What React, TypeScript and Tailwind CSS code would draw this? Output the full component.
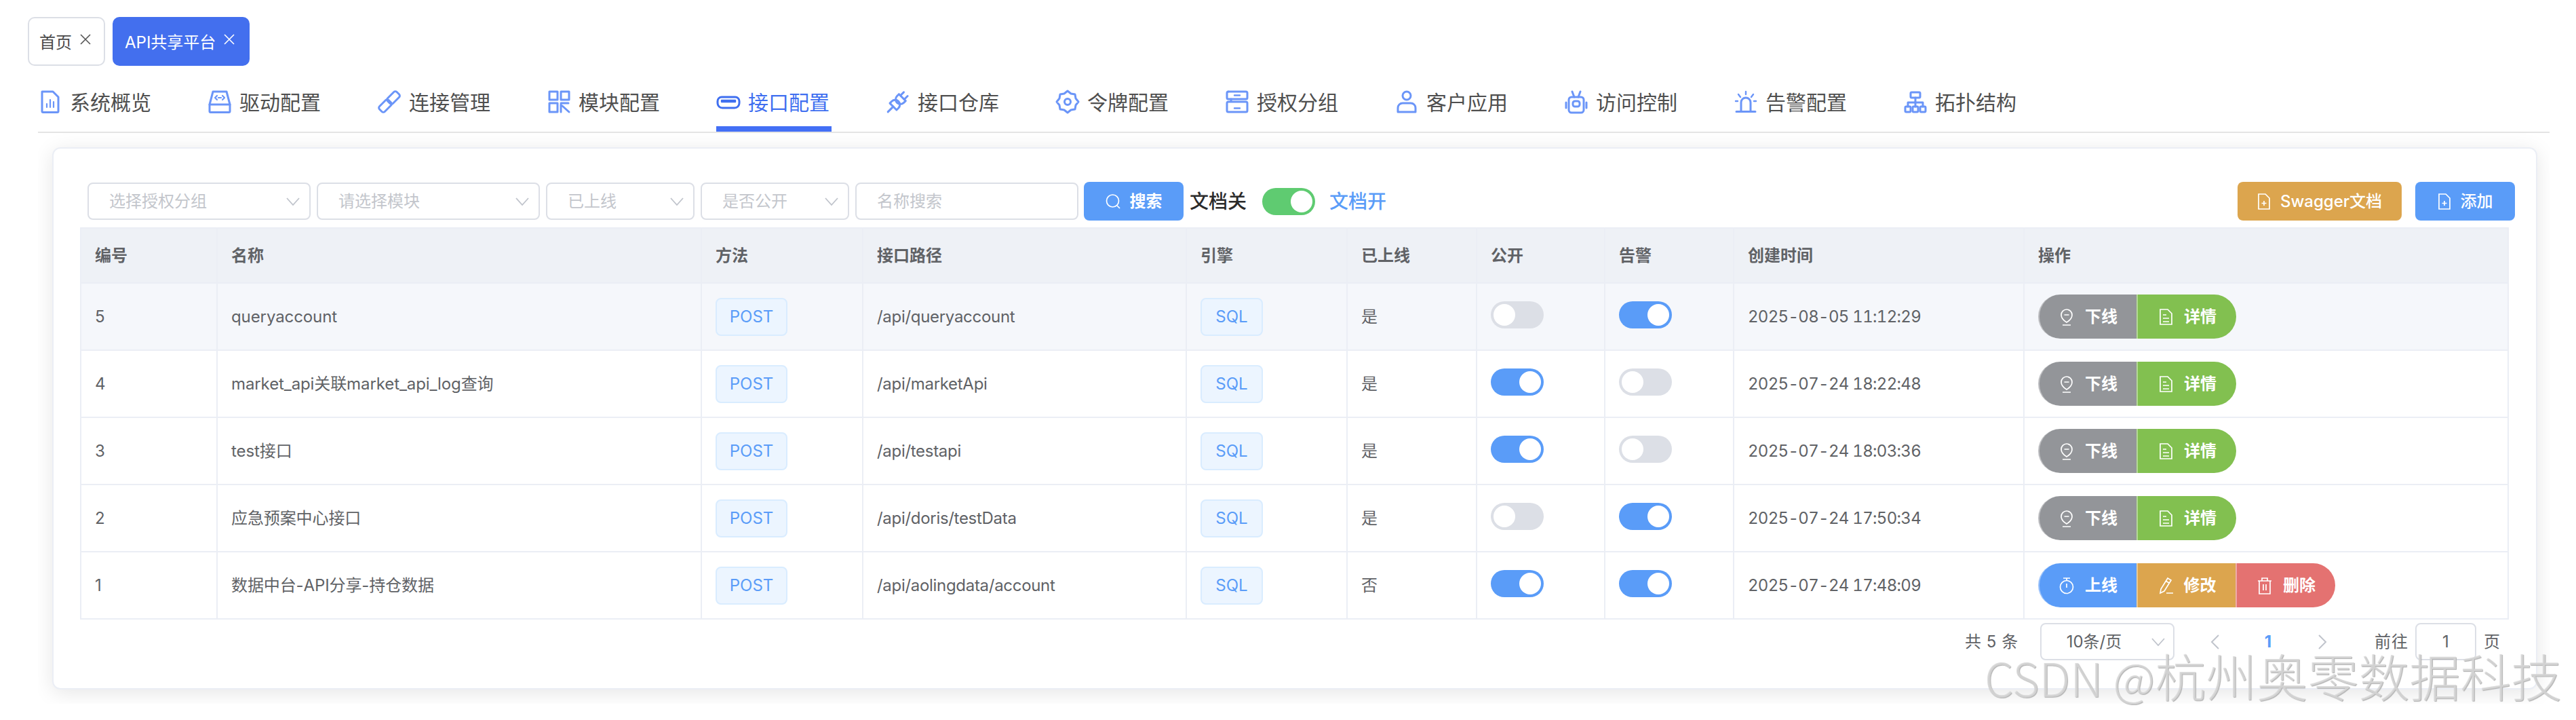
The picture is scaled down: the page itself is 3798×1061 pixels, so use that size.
import React from "react";

const BLUE = "#6b95f8";

function I({ children, color = BLUE }: any) {
  return (
    <svg width={36} height={36} viewBox="0 0 36 36" fill="none" stroke={color} strokeWidth={3} strokeLinejoin="round" strokeLinecap="round" className="shrink-0">
      {children}
    </svg>
  );
}

const navIcons: Record<string, React.ReactNode> = {
  report: (
    <I>
      <path d="M6 3h16l8 8v21a1.5 1.5 0 0 1-1.5 1.5h-21A1.5 1.5 0 0 1 6 32z" />
      <path d="M13 26v-5M18 26V15M23 26v-8" strokeWidth={2.2} />
    </I>
  ),
  drive: (
    <I>
      <path d="M8 3h20l5 19v10a1.5 1.5 0 0 1-1.5 1.5h-27A1.5 1.5 0 0 1 3 32V22z" />
      <path d="M3 22h30" />
      <path d="M14 9l-3 3 3 3M22 9l3 3-3 3M16 12h4" strokeWidth={2.2} />
    </I>
  ),
  link: (
    <I>
      <g transform="rotate(-45 18 18)">
        <rect x="0" y="12.5" width="19" height="11" rx="3" />
        <rect x="17" y="12.5" width="19" height="11" rx="3" />
      </g>
    </I>
  ),
  module: (
    <I>
      <rect x="4" y="3" width="12" height="12" />
      <rect x="21" y="3" width="12" height="12" />
      <rect x="4" y="20" width="12" height="13" />
      <path d="M21 20h11M21 22v11M23 24l10 9" />
    </I>
  ),
  iface: (
    <I color="#3f6ff0">
      <path d="M8 11h20a6 6 0 0 1 6 6v3a7 7 0 0 1-7 7H9a7 7 0 0 1-7-7v-3a6 6 0 0 1 6-6z" />
      <path d="M8 18v-2h20v2H8z" strokeWidth={2.4} />
    </I>
  ),
  plug: (
    <I>
      <g transform="rotate(-45 18 18)">
        <path d="M8 11h4a7 7 0 0 1 0 14H8z" />
        <path d="M27 11h-4a7 7 0 0 0 0 14h4z" />
        <path d="M8 18H-3M27 14h7M27 22h7" />
      </g>
    </I>
  ),
  token: (
    <I>
      <path d="M18 2l5 4 6 1 1 6 4 5-4 5-1 6-6 1-5 4-5-4-6-1-1-6-4-5 4-5 1-6 6-1z" />
      <circle cx="18" cy="18" r="4.5" />
    </I>
  ),
  group: (
    <I>
      <path d="M5 3h26a2 2 0 0 1 2 2v7a2 2 0 0 1-2 2H9v4h22a2 2 0 0 1 2 2v11a2 2 0 0 1-2 2H5a2 2 0 0 1-2-2V20a2 2 0 0 1 2-2h2" />
      <path d="M3 12V5a2 2 0 0 1 2-2M3 12a2 2 0 0 0 2 2h4" />
      <path d="M14 8.5h8M14 27.5h8" strokeWidth={2.4} />
    </I>
  ),
  user: (
    <I>
      <circle cx="18" cy="9" r="6" />
      <path d="M5 33v-6a7 7 0 0 1 7-7h12a7 7 0 0 1 7 7v6z" />
    </I>
  ),
  robot: (
    <I>
      <path d="M12 3l3 8M24 3l-3 8" />
      <rect x="7" y="11" width="22" height="23" rx="4" />
      <rect x="13" y="17" width="10" height="8" rx="3" />
      <path d="M3 19v8M33 19v8" />
    </I>
  ),
  alarm: (
    <I>
      <path d="M11 31V19a7 7 0 0 1 14 0v12M4 32.5h28" />
      <path d="M18 3v4M7 7l3 4M29 7l-3 4M3 17h3M30 17h3" strokeWidth={2.4} />
    </I>
  ),
  topo: (
    <I>
      <rect x="11" y="4" width="14" height="8" rx="1.5" />
      <rect x="3" y="25" width="8" height="8" rx="1.5" />
      <rect x="14" y="25" width="8" height="8" rx="1.5" />
      <rect x="25" y="25" width="8" height="8" rx="1.5" />
      <path d="M18 12v13M7 25v-6h22v6" />
    </I>
  ),
};

const navs = [
  ["report", "系统概览"],
  ["drive", "驱动配置"],
  ["link", "连接管理"],
  ["module", "模块配置"],
  ["iface", "接口配置"],
  ["plug", "接口仓库"],
  ["token", "令牌配置"],
  ["group", "授权分组"],
  ["user", "客户应用"],
  ["robot", "访问控制"],
  ["alarm", "告警配置"],
  ["topo", "拓扑结构"],
];

function Close({ color }: { color: string }) {
  return (
    <svg width="16" height="16" viewBox="0 0 16 16" stroke={color} strokeWidth="1.6" className="shrink-0 -mt-[6px] ml-[12px]">
      <path d="M1 1l14 14M15 1L1 15" />
    </svg>
  );
}

function Chevron() {
  return (
    <svg width="20" height="12" viewBox="0 0 20 12" fill="none" stroke="#c0c4cc" strokeWidth="1.8" className="shrink-0">
      <path d="M1 1l9 10 9-10" />
    </svg>
  );
}

function Sel({ w, text }: { w: string; text: string }) {
  return (
    <div className={`${w} h-[55px] mr-[9px] border-2 border-[#dcdfe6] rounded-[8px] flex items-center justify-between pl-[30px] pr-[14px] text-[24px] text-[#c3c6cc] shrink-0`}>
      <span>{text}</span>
      <Chevron />
    </div>
  );
}

function BtnIcon({ kind }: { kind: string }) {
  const p = { width: 24, height: 26, viewBox: "0 0 24 26", fill: "none", stroke: "#ffffff", strokeWidth: 1.7, className: "shrink-0" } as any;
  if (kind === "off")
    return (
      <svg {...p}>
        <path d="M12 21c-5-3-8-7-8-11a8 8 0 0 1 16 0c0 4-3 8-8 11z" />
        <path d="M8.5 10h7M6 25h12" />
      </svg>
    );
  if (kind === "doc")
    return (
      <svg {...p}>
        <path d="M4 2h11l6 6v16H4z" />
        <path d="M8 10h5M8 15h9M8 20h9" />
      </svg>
    );
  if (kind === "on")
    return (
      <svg {...p}>
        <circle cx="12" cy="15" r="9.5" />
        <path d="M7 2h10M12 2v3M12 10v6" />
      </svg>
    );
  if (kind === "edit")
    return (
      <svg {...p}>
        <path d="M15 2l5 3-10 16-6 3 1-6z" />
        <path d="M12 6l5 3M13 24h10" />
      </svg>
    );
  return (
    <svg {...p}>
      <path d="M2 6h20M8 6V2h8v4M4 6v19h16V6" />
      <path d="M10 11v9M14 11v9" />
    </svg>
  );
}

function Act({ bg, kind, text, w, first, last }: any) {
  return (
    <button className={`${w} ${bg} h-[65px] flex items-center justify-center gap-[15px] text-white text-[24px] font-bold border-l-2 border-[#ffffff66] ${first ? "rounded-l-[33px] border-l-0" : ""} ${last ? "rounded-r-[33px]" : ""}`}>
      <BtnIcon kind={kind} />
      <span>{text}</span>
    </button>
  );
}

function Switch({ on, green }: { on: boolean; green?: boolean }) {
  const bg = on ? (green ? "bg-[#5fcb71]" : "bg-[#5a9cf8]") : "bg-[#dcdfe6]";
  return (
    <span className={`${bg} inline-flex items-center w-[78px] h-[40px] rounded-full px-[4px] shrink-0 ${on ? "justify-end" : "justify-start"}`}>
      <span className="w-[32px] h-[32px] rounded-full bg-white" />
    </span>
  );
}

function Tag({ t, w }: { t: string; w: string }) {
  return (
    <span className={`${w} h-[56px] inline-flex items-center justify-center bg-[#ecf5ff] border-2 border-[#d9ecff] rounded-[8px] text-[#5a9cf8] text-[24px]`}>
      {t}
    </span>
  );
}

const rows = [
  { id: 5, name: "queryaccount", path: "/api/queryaccount", on: "是", pub: false, alarm: true, time: "2025-08-05 11:12:29", online: true },
  { id: 4, name: "market_api关联market_api_log查询", path: "/api/marketApi", on: "是", pub: true, alarm: false, time: "2025-07-24 18:22:48", online: true },
  { id: 3, name: "test接口", path: "/api/testapi", on: "是", pub: true, alarm: false, time: "2025-07-24 18:03:36", online: true },
  { id: 2, name: "应急预案中心接口", path: "/api/doris/testData", on: "是", pub: false, alarm: true, time: "2025-07-24 17:50:34", online: true },
  { id: 1, name: "数据中台-API分享-持仓数据", path: "/api/aolingdata/account", on: "否", pub: true, alarm: true, time: "2025-07-24 17:48:09", online: false },
];

const cols = ["w-[201px]", "w-[714px]", "w-[238px]", "w-[477px]", "w-[237px]", "w-[191px]", "w-[189px]", "w-[190px]", "w-[428px]", "w-[714px]"];
const heads = ["编号", "名称", "方法", "接口路径", "引擎", "已上线", "公开", "告警", "创建时间", "操作"];
const td = "border-2 border-[#ebeef5] pl-[20px] text-left align-middle";

export default function App() {
  return (
    <div className="relative w-[3798px] h-[1061px] overflow-hidden bg-white text-[#606266] font-['Inter','Noto_Sans_CJK_SC',sans-serif]">
      {/* tabs */}
      <div className="flex gap-[11px] pl-[41px] pt-[25px]">
        <div className="w-[114px] h-[72px] border-2 border-[#dcdfe6] rounded-[10px] flex items-center pl-[15px] text-[24px] text-[#4a4a4a]">
          <span className="pt-[3px]">首页</span>
          <Close color="#555555" />
        </div>
        <div className="w-[202px] h-[72px] bg-[#436fee] rounded-[10px] flex items-center pl-[18px] text-[24px] text-white">
          <span className="pt-[3px] whitespace-nowrap">API共享平台</span>
          <Close color="#ffffff" />
        </div>
      </div>
      {/* nav */}
      <div className="ml-[56px] mr-[39px] mt-[37px] h-[60px] border-b-2 border-[#e4e4e4] box-content flex gap-[80px] items-start">
        {navs.map(([k, t]) => {
          const active = t === "接口配置";
          return (
            <div key={t} className={`w-[170px] h-[60px] flex items-start relative ${active ? "text-[#3f6ff0]" : "text-[#4f4f4f]"}`}>
              <span className="flex items-center -mt-[2px]">{navIcons[k]}</span>
              <span className="ml-[11px] text-[30px] leading-[34px] whitespace-nowrap">{t}</span>
              {active && <span className="absolute left-0 right-0 top-[52px] h-[8px] bg-[#436ff5]" />}
            </div>
          );
        })}
      </div>
      {/* content */}
      <div className="ml-[56px] w-[3703px] h-[841px] overflow-hidden pt-[21px] pl-[21px]">
        <div className="w-[3664px] h-[799px] bg-white rounded-[12px] border-2 border-[#ebeef5] shadow-[0_5px_30px_rgba(0,0,0,0.1)] pl-[39px] pr-[31px] pt-[49px]">
          {/* filters */}
          <div className="flex items-center h-[57px] pl-[11px]">
            <Sel w="w-[329px]" text="选择授权分组" />
            <Sel w="w-[329px]" text="请选择模块" />
            <Sel w="w-[219px]" text="已上线" />
            <Sel w="w-[219px]" text="是否公开" />
            <div className="w-[329px] h-[55px] mr-[8px] border-2 border-[#dcdfe6] rounded-[8px] flex items-center pl-[30px] text-[24px] text-[#c3c6cc] shrink-0">名称搜索</div>
            <button className="w-[147px] h-[57px] bg-[#5a9cf8] rounded-[8px] flex items-center justify-center gap-[14px] text-white text-[24px] font-bold shrink-0">
              <svg width="22" height="24" viewBox="0 0 22 24" fill="none" stroke="#fff" strokeWidth="1.7"><circle cx="10.5" cy="11" r="9" /><path d="M17 18l4 4" /></svg>
              搜索
            </button>
            <span className="ml-[9px] text-[28px] font-medium text-[#2b2b2b] whitespace-nowrap">文档关</span>
            <span className="ml-[23px] flex"><Switch on green /></span>
            <span className="ml-[21px] text-[28px] font-medium text-[#5a9cf8] whitespace-nowrap">文档开</span>
            <div className="ml-auto flex gap-[20px]">
              <button className="w-[242px] h-[57px] bg-[#dca54e] rounded-[8px] flex items-center justify-center gap-[14px] text-white text-[24px] font-medium">
                <svg width="20" height="26" viewBox="0 0 20 26" fill="none" stroke="#fff" strokeWidth="1.7"><path d="M2 2h10l6 6v16H2z" /><path d="M10 12v7M6.5 15.5h7" /></svg>
                Swagger文档
              </button>
              <button className="w-[147px] h-[57px] bg-[#5a9cf8] rounded-[8px] flex items-center justify-center gap-[14px] text-white text-[24px] font-medium">
                <svg width="20" height="26" viewBox="0 0 20 26" fill="none" stroke="#fff" strokeWidth="1.7"><path d="M2 2h10l6 6v16H2z" /><path d="M10 12v7M6.5 15.5h7" /></svg>
                添加
              </button>
            </div>
          </div>
          {/* table */}
          <table className="mt-[10px] table-fixed border-collapse w-[3579px] text-[24px]">
            <colgroup>
              {cols.map((c, i) => (
                <col key={i} className={c} />
              ))}
            </colgroup>
            <thead>
              <tr className="h-[81px] bg-[#eef1f6]">
                {heads.map((h) => (
                  <th key={h} className={`${td} font-bold text-[#606266]`}>{h}</th>
                ))}
              </tr>
            </thead>
            <tbody>
              {rows.map((r, i) => (
                <tr key={r.id} className={`h-[99px] ${i === 0 ? "bg-[#f5f7fb]" : "bg-white"}`}>
                  <td className={td}>{r.id}</td>
                  <td className={`${td} tracking-[-0.1px]`}>{r.name}</td>
                  <td className={td}><Tag t="POST" w="w-[106px]" /></td>
                  <td className={`${td} tracking-[-0.3px]`}>{r.path}</td>
                  <td className={td}><Tag t="SQL" w="w-[92px]" /></td>
                  <td className={td}>{r.on}</td>
                  <td className={td}><Switch on={r.pub} /></td>
                  <td className={td}><Switch on={r.alarm} /></td>
                  <td className={`${td} tabular-nums tracking-[-0.7px]`}>{r.time}</td>
                  <td className={td}>
                    <div className="flex">
                      {r.online ? (
                        <>
                          <Act bg="bg-[#939599]" kind="off" text="下线" w="w-[145px]" first />
                          <Act bg="bg-[#82c050]" kind="doc" text="详情" w="w-[147px]" last />
                        </>
                      ) : (
                        <>
                          <Act bg="bg-[#5a9cf8]" kind="on" text="上线" w="w-[145px]" first />
                          <Act bg="bg-[#dca54e]" kind="edit" text="修改" w="w-[146px]" />
                          <Act bg="bg-[#e47271]" kind="del" text="删除" w="w-[147px]" last />
                        </>
                      )}
                    </div>
                  </td>
                </tr>
              ))}
            </tbody>
          </table>
          {/* pagination */}
          <div className="flex items-center justify-end h-[55px] mt-[5px] w-[3579px] pr-[11px] text-[24px]">
            <span className="whitespace-nowrap tracking-[0.5px]">共 5 条</span>
            <div className="ml-[32px] w-[198px] h-[55px] border-2 border-[#dcdfe6] rounded-[8px] flex items-center justify-between pl-[37px] pr-[12px]">
              <span className="whitespace-nowrap">10条/页</span>
              <Chevron />
            </div>
            <svg width="14" height="24" viewBox="0 0 14 24" fill="none" stroke="#c0c4cc" strokeWidth="2" className="ml-[53px]"><path d="M12 2L2 12l10 10" /></svg>
            <span className="ml-[66px] font-bold text-[#5a9cf8]">1</span>
            <svg width="14" height="24" viewBox="0 0 14 24" fill="none" stroke="#c0c4cc" strokeWidth="2" className="ml-[68px]"><path d="M2 2l10 10L2 22" /></svg>
            <span className="ml-[70px] tracking-[1px] whitespace-nowrap">前往</span>
            <div className="ml-[10px] w-[90px] h-[55px] border-2 border-[#dcdfe6] rounded-[8px] flex items-center justify-center">1</div>
            <span className="ml-[11px]">页</span>
          </div>
        </div>
      </div>
      {/* watermark */}
      <div className="absolute left-[2926px] top-[950px] flex items-baseline leading-[90px] whitespace-nowrap text-[#d9d9d9cc] font-['Noto_Sans_CJK_SC',sans-serif] font-light [text-shadow:1px_1px_1px_#b0b0b0]">
        <span className="text-[68px]">CSDN @</span>
        <span className="text-[75px]">杭州奥零数据科技</span>
      </div>
    </div>
  );
}
